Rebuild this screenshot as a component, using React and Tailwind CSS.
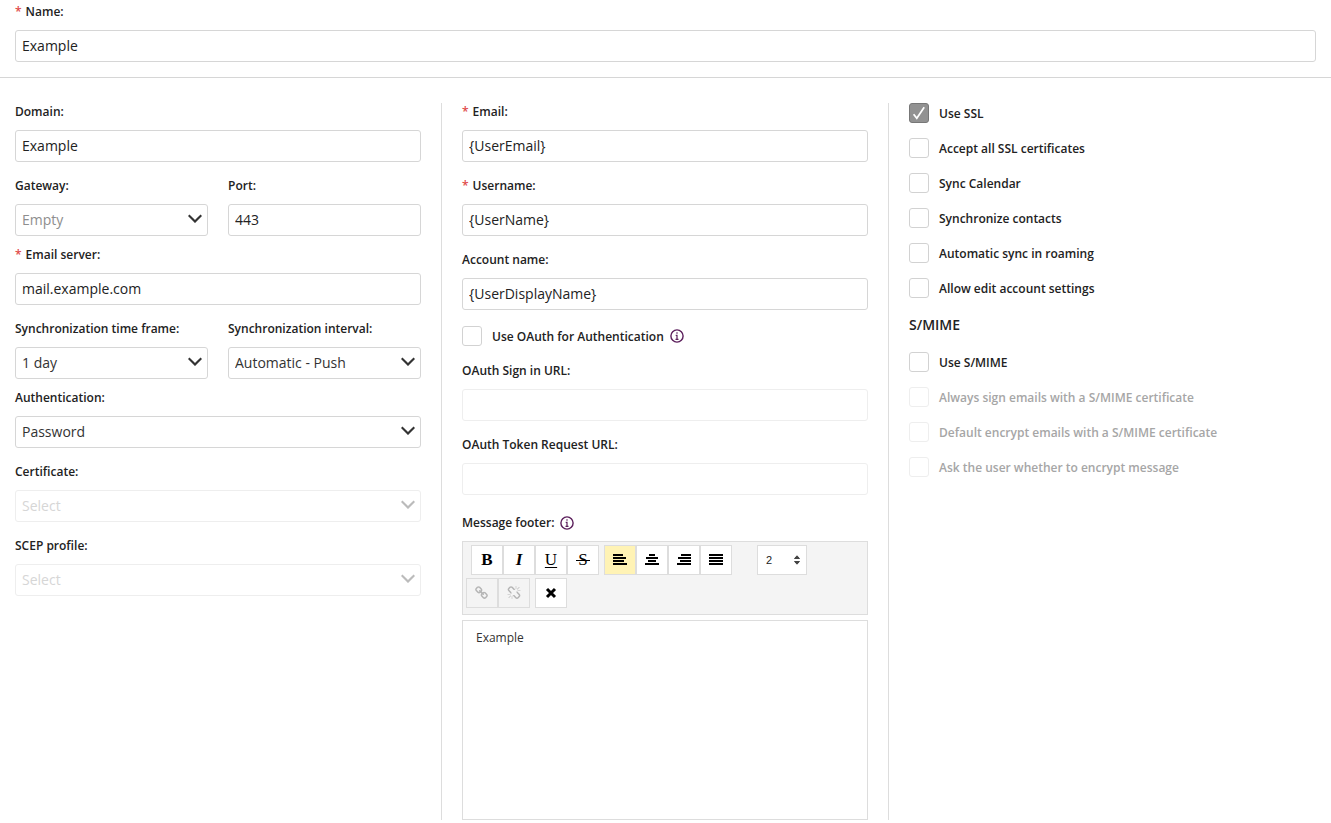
const labelText = "block text-[12px] leading-[18px] font-semibold text-[#222]";
const box =
  "block h-8 w-full appearance-none rounded-[3px] border bg-white px-[6px] text-[14px] leading-5 outline-none";

function Label({ htmlFor, required, children }) {
  return (
    <label htmlFor={htmlFor} className={labelText}>
      {required && <span className="mr-1 text-[#e04848]">*</span>}
      {children}
    </label>
  );
}

function TextField({ id, label, required, value = "", disabled }) {
  return (
    <div className="flex min-w-0 flex-col gap-[9px]">
      <Label htmlFor={id} required={required}>{label}</Label>
      <input
        id={id}
        type="text"
        defaultValue={value}
        disabled={disabled}
        className={`${box} pb-[2px] ${disabled ? "border-[#eee]" : "border-[#d6d6d6]"} text-[#222]`}
      />
    </div>
  );
}

function SelectField({ id, label, value, disabled, placeholder }) {
  const tone = disabled ? "text-[#d6d6d6]" : placeholder ? "text-[#8e8e8e]" : "text-[#333]";
  return (
    <div className="flex min-w-0 flex-col gap-[9px]">
      <Label htmlFor={id}>{label}</Label>
      <div className="relative">
        <select
          id={id}
          disabled={disabled}
          className={`${box} ${disabled ? "border-[#eee]" : "border-[#d6d6d6]"} ${tone} opacity-100`}
        >
          <option>{value}</option>
        </select>
        <svg
          viewBox="0 0 14 9"
          className={`pointer-events-none absolute top-[10px] right-[6px] h-[9px] w-[14px] ${disabled ? "text-[#bbb]" : "text-[#333]"}`}
          fill="none"
          stroke="currentColor"
          strokeWidth="2.2"
          aria-hidden="true"
        >
          <path d="M.7 1.200 7 7.500 13.300 1.200" />
        </svg>
      </div>
    </div>
  );
}

function CheckField({ id, label, checked, disabled }) {
  return (
    <div className="flex items-center gap-[10px]">
      <span className="relative block h-5 w-5">
        <input
          id={id}
          type="checkbox"
          defaultChecked={checked}
          disabled={disabled}
          className={`peer block h-5 w-5 appearance-none rounded-[3px] border bg-white checked:border-[#777] checked:bg-[#929292] ${disabled ? "border-[#eee]" : "border-[#d2d2d2]"}`}
        />
        <svg
          viewBox="0 0 20 20"
          className="pointer-events-none absolute inset-0 hidden h-5 w-5 peer-checked:block"
          fill="none"
          stroke="#fff"
          strokeWidth="1.7"
          aria-hidden="true"
        >
          <path d="M4.6 11.2 7.8 15.3 15.2 4.3" />
        </svg>
      </span>
      <label
        htmlFor={id}
        className={`pt-[2px] text-[12px] leading-[18px] font-semibold ${disabled ? "text-[#a6a6a6]" : "text-[#222]"}`}
      >
        {label}
      </label>
    </div>
  );
}

function InfoButton({ label }) {
  return (
    <button type="button" aria-label={label} className="block h-[14px] w-[14px] text-[#5b1e5b]">
      <svg viewBox="0 0 14 14" className="h-[14px] w-[14px]" fill="none" stroke="currentColor" aria-hidden="true">
        <circle cx="7" cy="7" r="6.1" strokeWidth="1.4" />
        <path d="M7 3.2v1.5M5.7 6.3H7v4M5.5 10.3h3" strokeWidth="1.2" />
      </svg>
    </button>
  );
}

function ToolButton({ label, active, disabled, children }) {
  const fill = active ? "bg-[#fff3b5]" : disabled ? "bg-[#f4f4f4] text-[#b5b5b5]" : "bg-white";
  return (
    <button
      type="button"
      aria-label={label}
      disabled={disabled}
      className={`flex h-[30px] w-8 items-center justify-center border border-[#ddd] ${fill}`}
    >
      {children}
    </button>
  );
}

const glyph = "font-['Liberation_Serif',serif] text-[17px] leading-5";

const alignPaths = {
  left: "M0 0h10v2H0zM0 3h13v2H0zM0 6h11v2H0zM0 9h14v2H0z",
  center: "M4 0h6v2H4zM1 3h12v2H1zM3 6h8v2H3zM0 9h14v2H0z",
  right: "M4 0h10v2H4zM1 3h13v2H1zM3 6h11v2H3zM0 9h14v2H0z",
  justify: "M0 0h14v2H0zM0 3h14v2H0zM0 6h14v2H0zM0 9h14v2H0z",
};

function AlignIcon({ kind }) {
  return (
    <svg viewBox="0 0 14 12" className="h-3 w-[14px]" fill="currentColor" aria-hidden="true">
      <path d={alignPaths[kind]} />
    </svg>
  );
}

function LinkIcon() {
  return (
    <svg viewBox="0 0 1792 1792" className="h-[14px] w-[14px]" fill="currentColor" aria-hidden="true">
      <path d="M1456 1216q0-40-28-68l-208-208q-28-28-68-28-42 0-72 32 3 3 19 18.5t21.5 21.5 15 19 13 25.5 3.5 27.5q0 40-28 68t-68 28q-15 0-27.5-3.5t-25.5-13-19-15-21.5-21.5-18.5-19q-33 31-33 73 0 40 28 68l206 207q27 27 68 27 40 0 68-26l147-146q28-28 28-67zm-703-705q0-40-28-68l-206-207q-28-28-68-28-39 0-68 27l-147 146q-28 28-28 67 0 40 28 68l208 208q27 27 68 27 42 0 72-31-3-3-19-18.5t-21.5-21.5-15-19-13-25.5-3.5-27.5q0-40 28-68t68-28q15 0 27.5 3.5t25.5 13 19 15 21.5 21.5 18.5 19q33-31 33-73zm895 705q0 120-85 203l-147 146q-83 83-203 83-121 0-204-85l-206-207q-83-83-83-203 0-123 88-209l-88-88q-86 88-208 88-120 0-204-84l-208-208q-84-84-84-204t85-203l147-146q83-83 203-83 121 0 204 85l206 207q83 83 83 203 0 123-88 209l88 88q86-88 208-88 120 0 204 84l208 208q84 84 84 204z" />
    </svg>
  );
}

function UnlinkIcon() {
  return (
    <svg viewBox="0 0 1792 1792" className="h-[14px] w-[14px]" fill="currentColor" aria-hidden="true">
      <path d="M503 1271l-256 256q-10 9-23 9-12 0-23-9-9-10-9-23t9-23l256-256q10-9 23-9t23 9q9 10 9 23t-9 23zm169 41v320q0 14-9 23t-23 9-23-9-9-23v-320q0-14 9-23t23-9 23 9 9 23zm-224-224q0 14-9 23t-23 9h-320q-14 0-23-9t-9-23 9-23 23-9h320q14 0 23 9t9 23zm1264 128q0 120-85 203l-147 146q-83 83-203 83-121 0-204-85l-334-335q-21-21-42-56l239-18 273 274q28 28 68 28.5t68-27.5l147-146q28-28 28-67 0-40-28-68l-274-275 18-239q35 21 56 42l336 336q84 86 84 204zm-617-724l-239 18-273-274q-28-28-68-28-39 0-68 27l-147 146q-28 28-28 67 0 40 28 68l274 274-18 240q-35-21-56-42l-336-336q-84-86-84-204 0-120 85-203l147-146q83-83 203-83 121 0 204 85l334 335q21 21 42 56zm633 84q0 14-9 23t-23 9h-320q-14 0-23-9t-9-23 9-23 23-9h320q14 0 23 9t9 23zm-544-544v320q0 14-9 23t-23 9-23-9-9-23v-320q0-14 9-23t23-9 23 9 9 23zm407 151l-256 256q-11 9-23 9t-23-9q-9-10-9-23t9-23l256-256q10-9 23-9t23 9q9 10 9 23t-9 23z" />
    </svg>
  );
}

export default function App() {
  return (
    <form className="bg-white pb-[3px] font-['Open_Sans','Noto_Sans',sans-serif] text-[#222]">
      <header className="border-b border-[#d6d6d6] px-[15px] pt-[3px] pb-[15px]">
        <TextField id="name" label="Name:" required value="Example" />
      </header>

      <div className="flex pt-[25px]">
        <section className="flex min-w-0 flex-1 flex-col gap-[15px] border-r border-[#ddd] pr-5 pl-[15px]">
          <TextField id="domain" label="Domain:" value="Example" />
          <div className="flex flex-col gap-[10px]">
            <div className="grid grid-cols-2 gap-5">
              <SelectField id="gateway" label="Gateway:" value="Empty" placeholder />
              <TextField id="port" label="Port:" value="443" />
            </div>
            <TextField id="server" label="Email server:" required value="mail.example.com" />
          </div>
          <div className="flex flex-col gap-[10px]">
            <div className="grid grid-cols-2 gap-5">
              <SelectField id="frame" label="Synchronization time frame:" value="1 day" />
              <SelectField id="interval" label="Synchronization interval:" value="Automatic - Push" />
            </div>
            <SelectField id="auth" label="Authentication:" value="Password" />
          </div>
          <SelectField id="cert" label="Certificate:" value="Select" disabled />
          <SelectField id="scep" label="SCEP profile:" value="Select" disabled />
        </section>

        <section className="flex min-w-0 flex-1 flex-col border-r border-[#ddd] px-5">
          <div className="flex flex-col gap-[15px]">
            <TextField id="email" label="Email:" required value="{UserEmail}" />
            <TextField id="username" label="Username:" required value="{UserName}" />
            <TextField id="account" label="Account name:" value="{UserDisplayName}" />
            <div className="flex items-center gap-[6px] py-px">
              <CheckField id="oauth" label="Use OAuth for Authentication" />
              <InfoButton label="About OAuth" />
            </div>
            <TextField id="signin" label="OAuth Sign in URL:" disabled />
            <TextField id="token" label="OAuth Token Request URL:" disabled />
          </div>

          <div className="mt-[19px] mb-[9px] flex items-center gap-[6px]">
            <Label htmlFor="footer">Message footer:</Label>
            <InfoButton label="About the message footer" />
          </div>

          <div className="flex flex-col gap-[3px] border border-[#ddd] bg-[#f4f4f4] px-[3px] pt-[3px] pb-[6px] text-black">
            <div className="flex pl-[5px]">
              <div className="flex">
                <ToolButton label="Bold"><span className={`${glyph} font-bold`}>B</span></ToolButton>
                <ToolButton label="Italic"><span className={`${glyph} font-bold italic`}>I</span></ToolButton>
                <ToolButton label="Underline"><span className={`${glyph} underline underline-offset-2`}>U</span></ToolButton>
                <ToolButton label="Strikethrough">
                  <span className={`${glyph} relative before:absolute before:-inset-x-[2px] before:top-[10px] before:h-px before:bg-black`}>S</span>
                </ToolButton>
              </div>
              <div className="ml-[5px] flex">
                <ToolButton label="Align left" active><AlignIcon kind="left" /></ToolButton>
                <ToolButton label="Align center"><AlignIcon kind="center" /></ToolButton>
                <ToolButton label="Align right"><AlignIcon kind="right" /></ToolButton>
                <ToolButton label="Justify"><AlignIcon kind="justify" /></ToolButton>
              </div>
              <div className="relative ml-[25px]">
                <select
                  aria-label="Font size"
                  className="block h-[30px] w-[50px] appearance-none border border-[#ddd] bg-white px-2 font-['Liberation_Sans',sans-serif] text-[11px] text-[#222]"
                >
                  <option>2</option>
                </select>
                <svg viewBox="0 0 8 10" className="pointer-events-none absolute top-[10px] right-[6px] h-[10px] w-2" fill="#444" stroke="#444" strokeLinejoin="round" aria-hidden="true">
                  <path d="M1.500 3.500 4 .8l2.500 2.700zM1.500 6.500h5L4 9.200z" />
                </svg>
              </div>
            </div>
            <div className="flex">
              <ToolButton label="Insert link" disabled><LinkIcon /></ToolButton>
              <ToolButton label="Remove link" disabled><UnlinkIcon /></ToolButton>
              <div className="ml-[5px]">
                <ToolButton label="Clear formatting">
                  <svg viewBox="0 0 12 12" className="h-3 w-3" stroke="currentColor" strokeWidth="3" aria-hidden="true">
                    <path d="m2 2 8 8M10 2l-8 8" />
                  </svg>
                </ToolButton>
              </div>
            </div>
          </div>

          <textarea
            id="footer"
            defaultValue="Example"
            className="mt-[5px] block h-[200px] w-full resize-none border border-[#ddd] px-[13px] py-2 text-[12px] leading-[18px] text-[#333] outline-none"
          />
        </section>

        <section className="flex min-w-0 flex-1 flex-col gap-[17px] pr-4 pl-5">
          <div className="flex flex-col gap-[15px]">
            <CheckField id="ssl" label="Use SSL" checked />
            <CheckField id="accept" label="Accept all SSL certificates" />
            <CheckField id="calendar" label="Sync Calendar" />
            <CheckField id="contacts" label="Synchronize contacts" />
            <CheckField id="roaming" label="Automatic sync in roaming" />
            <CheckField id="edit" label="Allow edit account settings" />
          </div>
          <h2 className="text-[14px] leading-5 font-semibold">S/MIME</h2>
          <div className="flex flex-col gap-[15px]">
            <CheckField id="smime" label="Use S/MIME" />
            <CheckField id="sign" label="Always sign emails with a S/MIME certificate" disabled />
            <CheckField id="encrypt" label="Default encrypt emails with a S/MIME certificate" disabled />
            <CheckField id="ask" label="Ask the user whether to encrypt message" disabled />
          </div>
        </section>
      </div>
    </form>
  );
}
